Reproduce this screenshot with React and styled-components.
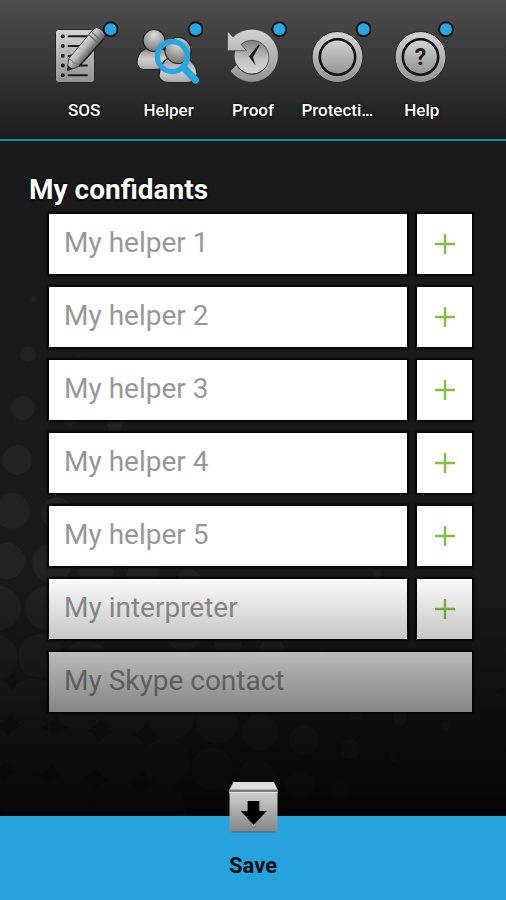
import { useState } from 'react';
import styled, { createGlobalStyle } from 'styled-components';

const GlobalStyle = createGlobalStyle`
    * {
        box-sizing: border-box;
    }
    body {
        margin: 0;
        background: #000;
        font-family: Roboto, 'Liberation Sans', sans-serif;
    }
    button,
    input {
        margin: 0;
        padding: 0;
        border: 0;
        border-radius: 0;
        font-family: inherit;
    }
    button {
        cursor: pointer;
    }
    svg {
        display: block;
    }
`;

const Page = styled.div`
    min-height: 100vh;
    display: flex;
    flex-direction: column;
`;

const TabBar = styled.nav`
    display: grid;
    grid-template-columns: repeat(5, 1fr);
    padding: 20px 42px 18px;
    background: linear-gradient(#4e4e4e, #1c1c1c);
    border-bottom: 2px solid #1d86ad;
`;

const TabButton = styled.button`
    display: flex;
    flex-direction: column;
    align-items: center;
    gap: 12px;
    min-width: 0;
    background: none;
    color: #fff;

    span {
        white-space: nowrap;
        font-size: 17px;
        font-weight: 500;
        line-height: 21px;
        text-shadow: 0 0 3px #000;
    }
`;

const Content = styled.main`
    flex: 1;
    position: relative;
    overflow: hidden;
    padding: 32px 34px 103px 29px;
    background: #1b1b1b;
`;

const Backdrop = styled.svg`
    position: absolute;
    top: 0;
    left: 0;
    width: 506px;
    height: 675px;
    fill: #232323;
`;

const Title = styled.h1`
    position: relative;
    margin: 0 0 7px;
    font-size: 28px;
    line-height: 34px;
    font-weight: 700;
    color: #fff;
    text-shadow: 0 0 3px #000, 0 1px 2px #000;
`;

const Form = styled.form`
    position: relative;
    display: flex;
    flex-direction: column;
    gap: 13px;
    padding-left: 20px;
`;

const Row = styled.div`
    display: flex;
    gap: 10px;
    height: 60px;
`;

const Field = styled.input`
    flex: 1;
    min-width: 0;
    padding: 0 15px 3px;
    background: #fff;
    box-shadow: 0 0 2px 2px #060606;
    font-size: 28px;
    color: #333;
    outline: none;

    &::placeholder {
        color: #989898;
        opacity: 1;
    }
`;

const AddButton = styled.button`
    flex: 0 0 55px;
    display: flex;
    align-items: center;
    justify-content: center;
    background: #fff;
    box-shadow: 0 0 2px 2px #060606;
    color: #7fc241;
`;

const Fade = styled.div`
    position: absolute;
    left: 0;
    right: 0;
    bottom: 0;
    height: 242px;
    background: linear-gradient(rgba(0, 0, 0, 0), rgba(0, 0, 0, 0.84));
    pointer-events: none;
`;

const SaveBar = styled.footer`
    position: relative;
    display: flex;
    justify-content: center;
    height: 84px;
    background: #24a3dd;
`;

const SaveButton = styled.button`
    display: flex;
    flex-direction: column;
    align-items: center;
    gap: 20px;
    margin-top: -35px;
    background: none;
    font-size: 22px;
    line-height: 26px;
    font-weight: 700;
    color: #0b0f12;
`;

// halftone pattern: x, y, radius
const dots = [
    [34, 158, 3], [28, 213, 8], [77, 218, 4], [23, 267, 12], [70, 274, 10],
    [115, 283, 8], [17, 319, 15], [12, 370, 18], [57, 372, 16], [7, 420, 18],
    [52, 422, 20], [96, 428, 18], [143, 434, 16], [189, 440, 12], [-1, 467, 22],
    [47, 467, 22], [92, 473, 21], [-5, 517, 23], [40, 515, 22], [86, 521, 22],
    [183, 493, 17], [228, 500, 14], [272, 509, 12], [317, 517, 10],
    [-10, 560, 25], [34, 562, 25], [80, 565, 25], [125, 570, 25],
    [171, 575, 24], [217, 582, 21], [260, 591, 18], [304, 599, 15],
    [350, 608, 10], [393, 616, 5], [356, 570, 9], [400, 577, 7],
    [445, 585, 5], [377, 433, 4], [498, 554, 2],
    [-16, 606, 26], [30, 609, 26], [75, 612, 26], [120, 616, 26],
    [166, 621, 24], [212, 628, 21], [257, 636, 18], [300, 644, 14],
    [342, 650, 9], [-20, 654, 27], [25, 657, 27], [70, 660, 27],
    [116, 664, 26], [162, 668, 25],
];

const Metal = ({ id }) => (
    <linearGradient id={id} x1="0" y1="0" x2="0" y2="1">
        <stop offset="0" stopColor="#d4d4d4" />
        <stop offset="1" stopColor="#929292" />
    </linearGradient>
);

const Badge = ({ cx = 60.6 }) => (
    <circle cx={cx} cy="9.3" r="7" fill="#27a7e1" stroke="#111" strokeWidth="2" />
);

const SosIcon = () => (
    <svg width="68" height="68" viewBox="0 0 68 68">
        <defs>
            <Metal id="paper" />
            <linearGradient id="pencil" gradientUnits="userSpaceOnUse" x1="28" y1="24" x2="39" y2="33">
                <stop offset="0" stopColor="#dedede" />
                <stop offset="0.5" stopColor="#bdbdbd" />
                <stop offset="1" stopColor="#6e6e6e" />
            </linearGradient>
        </defs>
        <rect x="5.5" y="9.5" width="39" height="53" rx="3" fill="url(#paper)" stroke="#262626" />
        {[16.3, 26, 35.8, 45.6, 55.3].map((y) => (
            <g key={y} fill="#1b1b1b">
                <circle cx="12.7" cy={y} r="2" />
                <rect x="17.5" y={y - 1} width="20.5" height="2" rx="1" />
            </g>
        ))}
        <path
            d="M17.5 50.5 L18.5 39 L43 9.5 Q46 6 49.5 8.5 L54 12.2 Q56.5 15 54 18.500 L29 46.500 Z"
            fill="url(#pencil)"
            stroke="#2a2a2a"
            strokeWidth="0.8"
        />
        <path d="M18.5 39.5 Q22.5 39 23 43 Q27.500 42.500 28.500 46.500" fill="none" stroke="#777" strokeWidth="1" />
        <path d="M39 15 L48.500 23.500 M41.500 12 L51 20.500" fill="none" stroke="#6a6a6a" strokeWidth="1.200" />
        <path d="M29 46.500 L54 18.500" stroke="#1c1c1c" strokeWidth="1.400" />
        <path d="M17.300 51 L18 45.500 L22.500 49 Z" fill="#222" />
        <Badge />
    </svg>
);

const HelperIcon = () => (
    <svg width="68" height="68" viewBox="0 0 68 68">
        <defs>
            <linearGradient id="person" x1="0" y1="0" x2="0" y2="1">
                <stop offset="0" stopColor="#8f8f8f" />
                <stop offset="0.5" stopColor="#d0d0d0" />
                <stop offset="1" stopColor="#a8a8a8" />
            </linearGradient>
            <radialGradient id="head" cx="0.5" cy="0.25" r="0.75">
                <stop offset="0" stopColor="#dadada" />
                <stop offset="1" stopColor="#777" />
            </radialGradient>
        </defs>
        <g stroke="#222" strokeWidth="1.200">
            <path d="M2 43 Q2 33 10 29 H28 Q35 33 35 43 Q32 49.500 20 49.500 H9 Q3 49 2 43 Z" fill="url(#person)" />
            <circle cx="19" cy="20.500" r="11" fill="url(#head)" />
            <path d="M24 56 Q25 43 33 38 H52 Q61 43 62 54 Q61 62.500 51 62.500 H34 Q25 62 24 56 Z" fill="url(#person)" />
            <circle cx="43" cy="30.500" r="13" fill="url(#head)" />
        </g>
        <path d="M48.500 47.500 L60.500 60" stroke="#27a7e1" strokeWidth="7" strokeLinecap="round" />
        <circle cx="37.300" cy="36.500" r="15" fill="none" stroke="#27a7e1" strokeWidth="5.400" />
        <Badge />
    </svg>
);

const ProofIcon = () => (
    <svg width="68" height="68" viewBox="0 0 68 68">
        <defs>
            <Metal id="ring" />
            <linearGradient id="face" x1="0" y1="0" x2="0" y2="1">
                <stop offset="0" stopColor="#777" />
                <stop offset="0.6" stopColor="#c4c4c4" />
                <stop offset="1" stopColor="#d4d4d4" />
            </linearGradient>
        </defs>
        <circle cx="33" cy="36" r="17.500" fill="url(#face)" />
        <path
            d="M14 17 A26.500 26.500 0 1 1 11.200 51 L17.500 44.500 A17 17 0 1 0 22 24.300 L27.500 30.700 H8.500 V11 Z"
            fill="url(#ring)"
            stroke="#2a2a2a"
            strokeWidth="0.600"
        />
        <path d="M30 36.500 L39.500 24.500 L40.700 25.500 L34 37 L36.500 45.500 Z" fill="#151515" />
        <Badge cx="60.300" />
    </svg>
);

const Knob = ({ id, cx, children }) => (
    <svg width="68" height="68" viewBox="0 0 68 68">
        <defs>
            <Metal id={id} />
        </defs>
        <circle cx={cx} cy="37" r="25.500" fill={`url(#${id})`} stroke="#242424" />
        <circle cx={cx} cy="37" r="17.700" fill={`url(#${id})`} stroke="#111" strokeWidth="2.600" />
        {children}
    </svg>
);

const ProtectionIcon = () => (
    <Knob id="protection" cx="34.500">
        <Badge />
    </Knob>
);

const HelpIcon = () => (
    <Knob id="help" cx="32.500">
        <text x="32.500" y="45" textAnchor="middle" fontSize="23" fontWeight="700" fill="#1c1c1c">
            ?
        </text>
        <Badge cx="58" />
    </Knob>
);

const PlusIcon = () => (
    <svg width="20" height="20" viewBox="0 0 20 20">
        <path d="M10 0 V20 M0 10 H20" stroke="currentColor" strokeWidth="2.400" />
    </svg>
);

const SaveIcon = () => (
    <svg width="50" height="52" viewBox="0 0 50 52">
        <defs>
            <linearGradient id="box" x1="0" y1="0" x2="0" y2="1">
                <stop offset="0" stopColor="#cfcfcf" />
                <stop offset="1" stopColor="#858585" />
            </linearGradient>
        </defs>
        <path d="M5.500 1 H46 L49.500 8.500 V11 H1.500 V8.500 Z" fill="#dcdcdc" />
        <path d="M1.500 8.500 H49.500 V11 H1.500 Z" fill="#7c7c7c" />
        <path d="M1.500 11 H49.500 V48 Q49.500 51 46.500 51 H4.500 Q1.500 51 1.500 48 Z" fill="url(#box)" />
        <path d="M1.500 11.500 H49.500" stroke="#e2e2e2" />
        <path d="M3.500 51 H47.500" stroke="#5f6468" />
        <path d="M19.600 20 H31.300 V30 H38.800 L25.500 44 L12.800 30 H19.600 Z" fill="#000" />
    </svg>
);

const tabs = [
    { label: 'SOS', Icon: SosIcon },
    { label: 'Helper', Icon: HelperIcon },
    { label: 'Proof', Icon: ProofIcon },
    { label: 'Protecti…', Icon: ProtectionIcon },
    { label: 'Help', Icon: HelpIcon },
];

const contacts = [
    { name: 'helper1', label: 'My helper 1', canAdd: true },
    { name: 'helper2', label: 'My helper 2', canAdd: true },
    { name: 'helper3', label: 'My helper 3', canAdd: true },
    { name: 'helper4', label: 'My helper 4', canAdd: true },
    { name: 'helper5', label: 'My helper 5', canAdd: true },
    { name: 'interpreter', label: 'My interpreter', canAdd: true },
    { name: 'skype', label: 'My Skype contact', canAdd: false },
];

const ContactRow = ({ contact, value, onChange }) => (
    <Row>
        <Field
            name={contact.name}
            aria-label={contact.label}
            placeholder={contact.label}
            value={value}
            onChange={(e) => onChange(contact.name, e.target.value)}
        />
        {contact.canAdd && (
            <AddButton type="button" aria-label={`Add ${contact.label}`}>
                <PlusIcon />
            </AddButton>
        )}
    </Row>
);

const App = () => {
    const [values, setValues] = useState({});

    const handleChange = (name, value) => {
        setValues((prev) => ({ ...prev, [name]: value }));
    };

    return (
        <Page>
            <GlobalStyle />
            <TabBar>
                {tabs.map(({ label, Icon }) => (
                    <TabButton type="button" key={label}>
                        <Icon />
                        <span>{label}</span>
                    </TabButton>
                ))}
            </TabBar>
            <Content>
                <Backdrop viewBox="0 0 506 675" aria-hidden="true">
                    {dots.map(([x, y, r]) => (
                        <circle key={`${x}-${y}`} cx={x} cy={y} r={r} />
                    ))}
                </Backdrop>
                <Title>My confidants</Title>
                <Form id="confidants" onSubmit={(e) => e.preventDefault()}>
                    {contacts.map((contact) => (
                        <ContactRow
                            key={contact.name}
                            contact={contact}
                            value={values[contact.name] || ''}
                            onChange={handleChange}
                        />
                    ))}
                </Form>
                <Fade />
            </Content>
            <SaveBar>
                <SaveButton type="submit" form="confidants">
                    <SaveIcon />
                    Save
                </SaveButton>
            </SaveBar>
        </Page>
    );
};

export default App;
